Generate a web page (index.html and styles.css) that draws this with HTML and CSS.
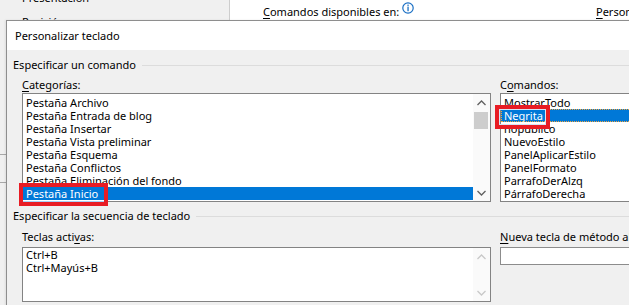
FILE: index.html
```html
<!DOCTYPE html>
<html lang="es">

<head>
	<meta charset="UTF-8" />
	<meta name="viewport" content="width=device-width, initial-scale=1.0" />
	<title>Personalizar teclado</title>
	<link rel="stylesheet" href="styles.css">
</head>

<body>

	<div class="backdrop">
		<div class="side">
			<div class="side-item">Presentación</div>
			<div class="side-item">Revisión</div>
			<div class="side-group"></div>
		</div>
		<div class="ribbon-pane">
			<div class="ribbon-head">
				<div class="avail-wrap">
					<span><u>C</u>omandos disponibles en:</span>
					<svg class="info" width="12" height="12" viewBox="0 0 12 12">
						<circle cx="6" cy="6" r="5.2" fill="none" stroke="#1a6fc4" stroke-width="1.2" />
						<rect x="5.4" y="2.6" width="1.3" height="1.3" fill="#1a6fc4" />
						<rect x="5.4" y="4.6" width="1.3" height="4.6" fill="#1a6fc4" />
					</svg>
				</div>
				<span class="custom"><u>P</u>ersonalizar la cinta de opciones:</span>
			</div>
		</div>
	</div>

	<div class="dialog">
		<div class="titlebar">Personalizar teclado</div>
		<div class="dialog-body">
			<div class="group-title">Especificar un comando</div>
			<div class="group-row">
				<div class="col-left">
					<div class="field-label"><u>C</u>ategorías:</div>
					<div class="listbox tall">
						<ul class="items">
							<li>Pestaña Archivo</li>
							<li>Pestaña Entrada de blog</li>
							<li>Pestaña Insertar</li>
							<li>Pestaña Vista preliminar</li>
							<li>Pestaña Esquema</li>
							<li>Pestaña Conflictos</li>
							<li>Pestaña Eliminación del fondo</li>
							<li class="selected">Pestaña Inicio</li>
						</ul>
						<div class="scrollbar">
							<span class="arrow">
								<svg width="9" height="6" viewBox="0 0 9 6"><polyline points="0.5,5 4.5,1 8.5,5" fill="none" stroke="#606060" stroke-width="1.3" /></svg>
							</span>
							<span class="thumb"></span>
							<span class="track"></span>
							<span class="arrow">
								<svg width="9" height="6" viewBox="0 0 9 6"><polyline points="0.5,1 4.5,5 8.5,1" fill="none" stroke="#606060" stroke-width="1.3" /></svg>
							</span>
						</div>
					</div>
				</div>
				<div class="col-right">
					<div class="field-label">C<u>o</u>mandos:</div>
					<div class="listbox tall">
						<ul class="items">
							<li>MostrarTodo</li>
							<li class="selected focused">Negrita</li>
							<li>nopublico</li>
							<li>NuevoEstilo</li>
							<li>PanelAplicarEstilo</li>
							<li>PanelFormato</li>
							<li>ParrafoDerAlzq</li>
							<li>PárrafoDerecha</li>
						</ul>
					</div>
				</div>
			</div>

			<div class="group-title second">Especificar la secuencia de teclado</div>
			<div class="group-row">
				<div class="col-left">
					<div class="field-label">Teclas acti<u>v</u>as:</div>
					<div class="listbox short">
						<ul class="items keys">
							<li>Ctrl+B</li>
							<li>Ctrl+Mayús+B</li>
						</ul>
						<div class="scrollbar disabled">
							<span class="arrow">
								<svg width="9" height="6" viewBox="0 0 9 6"><polyline points="0.5,5 4.5,1 8.5,5" fill="none" stroke="#c8c8c8" stroke-width="1.3" /></svg>
							</span>
							<span class="track"></span>
							<span class="arrow">
								<svg width="9" height="6" viewBox="0 0 9 6"><polyline points="0.5,1 4.5,5 8.5,1" fill="none" stroke="#c8c8c8" stroke-width="1.3" /></svg>
							</span>
						</div>
					</div>
				</div>
				<div class="col-right">
					<div class="field-label"><u>N</u>ueva tecla de método abreviado:</div>
					<div class="textbox"></div>
				</div>
			</div>
		</div>
	</div>

	<div class="callout callout-cat"></div>
	<div class="callout callout-cmd"></div>

</body>

</html>
```

FILE: styles.css
```css
* {
	box-sizing: border-box;
	margin: 0;
	padding: 0;
}

body {
	width: 629px;
	height: 305px;
	overflow: hidden;
	position: relative;
	font-family: 'Noto Sans', sans-serif;
	font-size: 11px;
	color: #000;
	background: #fff;
}

u {
	text-underline-offset: 2px;
}

/* window behind the dialog */
.backdrop {
	display: flex;
	height: 305px;
}

.side {
	width: 230px;
	flex-shrink: 0;
	background: #f0f0f0;
	border-right: 1px solid #cdcdcd;
	padding-left: 22px;
	margin-top: -14px;
}

.side-item {
	height: 24px;
	line-height: 24px;
	white-space: nowrap;
}

.side-group {
	margin: 120px 0 0 -22px;
	height: 29px;
	border-top: 1px solid #a8a8a8;
	border-bottom: 1px solid #a8a8a8;
}

.ribbon-pane {
	flex: 1;
	min-width: 0;
	overflow: hidden;
	background: #fff;
}

.ribbon-head {
	height: 21px;
	border-bottom: 1px solid #7a7a7a;
	padding: 3px 0 0 33px;
	line-height: 18px;
	display: flex;
	align-items: flex-start;
	white-space: nowrap;
}

.avail-wrap {
	width: 333px;
	flex-shrink: 0;
	display: flex;
	align-items: flex-start;
}

.info {
	margin: -1px 0 0 3px;
}

/* dialog */
.dialog {
	position: absolute;
	left: 6px;
	top: 20px;
	width: 700px;
	height: 300px;
	border-left: 1px solid #8e8e8e;
	border-top: 1px solid #8e8e8e;
	background: #f0f0f0;
	box-shadow: -1px 0 2px rgba(0, 0, 0, 0.08);
}

.titlebar {
	height: 29px;
	line-height: 29px;
	background: #fff;
	padding-left: 8px;
}

.dialog-body {
	padding: 7px 0 0 6px;
}

.group-title {
	display: flex;
	align-items: center;
	height: 16px;
	line-height: 16px;
	white-space: nowrap;
}

.group-title::after {
	content: '';
	flex: 1;
	height: 1px;
	background: #dcdcdc;
	margin-left: 6px;
}

.group-title.second {
	margin-top: 6px;
}

.group-row {
	display: flex;
	gap: 9px;
	padding-left: 9px;
}

.col-left {
	width: 469px;
}

.col-right {
	width: 170px;
}

.field-label {
	height: 16px;
	line-height: 16px;
	margin-top: 4px;
	white-space: nowrap;
}

.group-title.second + .group-row .field-label {
	margin: 5px 0 2px;
}

.listbox {
	display: flex;
	background: #fff;
	border: 1px solid #838383;
}

.listbox.tall {
	height: 109px;
	padding: 2px 0 1px;
}

.listbox.tall .scrollbar {
	margin: -2px 0 -1px;
}

.listbox.short {
	height: 55px;
}

.items {
	list-style: none;
	flex: 1;
}

.items li {
	height: 13px;
	line-height: 13px;
	padding-left: 3px;
	white-space: nowrap;
}

.items li.selected {
	background: #0078d7;
	color: #fff;
}

.items li.focused {
	outline: 1px dotted #f0a640;
	outline-offset: -1px;
}

.scrollbar {
	width: 17px;
	background: #fafafa;
	display: flex;
	flex-direction: column;
}

.arrow {
	height: 17px;
	display: flex;
	align-items: center;
	justify-content: center;
}

.thumb {
	height: 17px;
	margin: 1px 2px 0 1px;
	background: #cdcdcd;
}

.track {
	flex: 1;
}

.textbox {
	height: 18px;
	background: #fff;
	border: 1px solid #8c8c8c;
}

/* red annotation frames */
.callout {
	position: absolute;
	border: 4px solid #e81c24;
}

.callout-cat {
	left: 19px;
	top: 183px;
	width: 89px;
	height: 23px;
	box-shadow: inset 0 -1px 0 #a9d0f5;
}

.callout-cmd {
	left: 495px;
	top: 105px;
	width: 55px;
	height: 24px;
	box-shadow: inset 0 0 0 1px #d6e6f6;
}
```
